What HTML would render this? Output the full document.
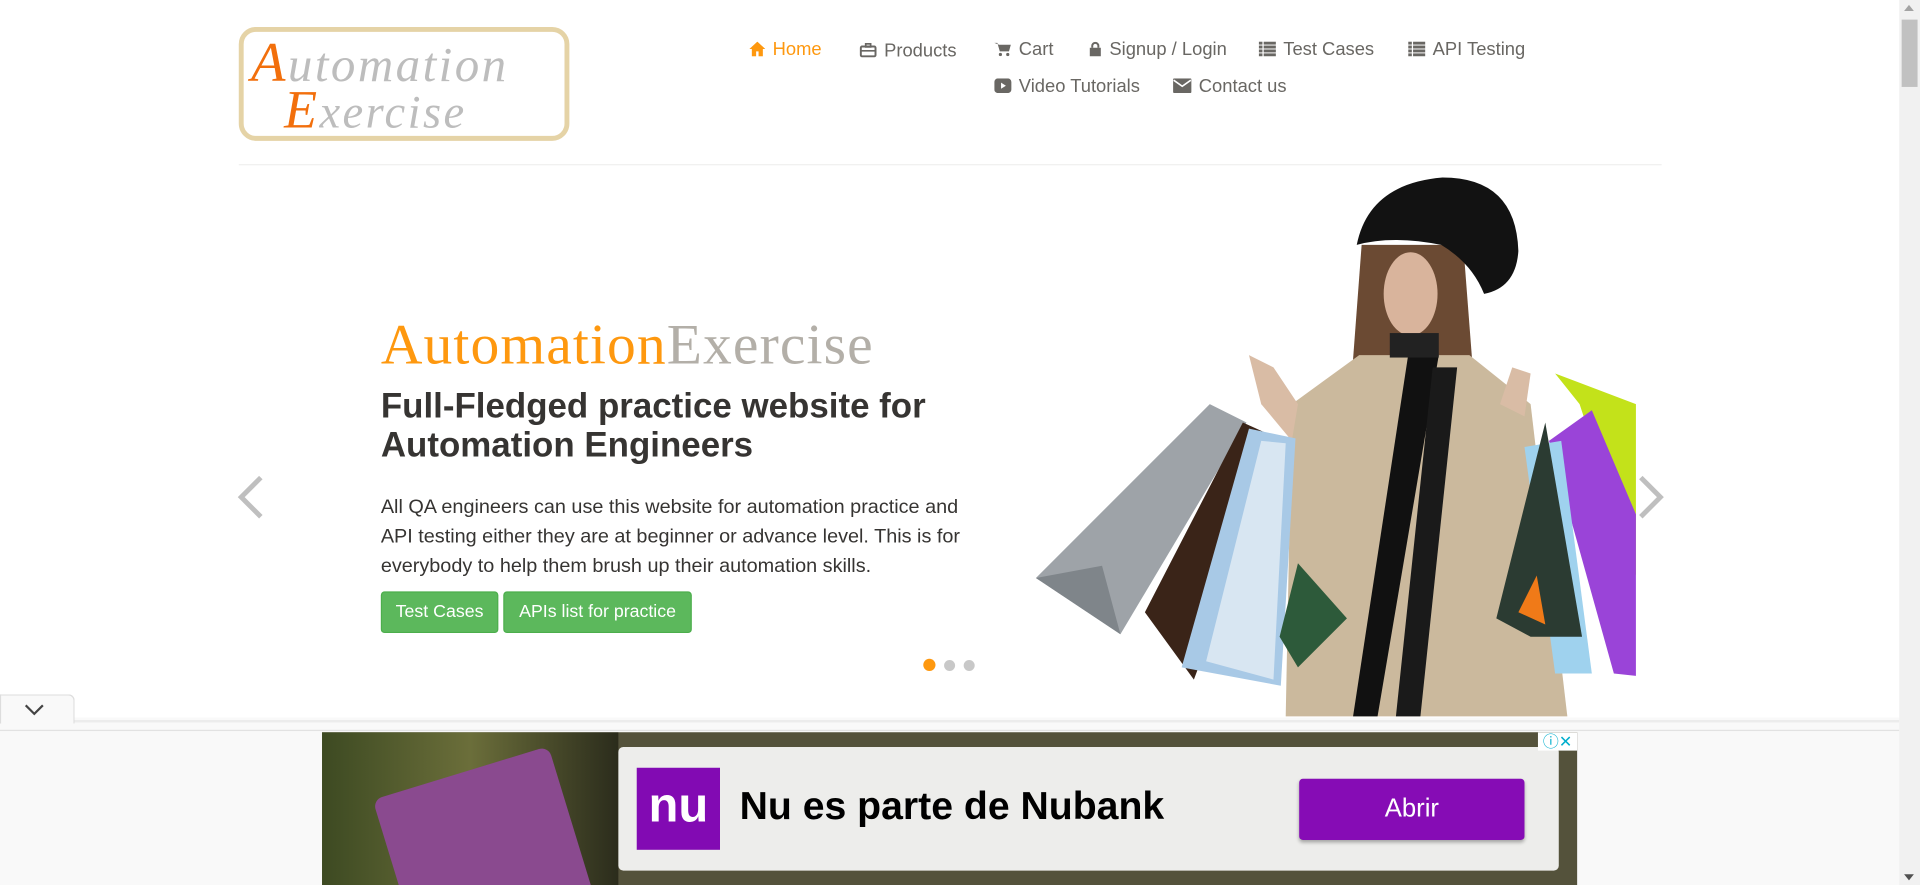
<!DOCTYPE html>
<html><head><meta charset="utf-8">
<style>
html,body{margin:0;padding:0;width:1920px;height:885px;overflow:hidden;background:#fff;font-family:"Liberation Sans",Arial,sans-serif;}
#w{position:absolute;left:0;top:0;width:1568px;height:723px;overflow:hidden;transform:scale(1.22449);transform-origin:0 0;}
.a{position:absolute;white-space:nowrap;}
.nav{font-size:15px;color:#696763;}
.nav svg{vertical-align:-1px;margin-right:6px;}
.btn{position:absolute;background:#5cb85c;border:1px solid #4cae4c;color:#fff;font-size:14.5px;border-radius:3px;text-align:center;line-height:32px;height:32px;}
</style></head><body>
<div id="w">
<div class="a" style="left:195px;top:22px;width:262px;height:85px;border:4px solid #e5d3a6;border-radius:14px;background:#fff;"></div>
<div class="a" style="left:205px;top:24px;font-family:'Liberation Serif',serif;font-style:italic;font-size:40px;color:#bdbdbd;letter-spacing:2px;"><span style="color:#f26f0c;font-size:46px">A</span>utomation</div>
<div class="a" style="left:232px;top:64px;font-family:'Liberation Serif',serif;font-style:italic;font-size:38px;color:#bdbdbd;letter-spacing:2px;"><span style="color:#f26f0c;font-size:44px">E</span>xercise</div>

<div class="a nav" style="left:612px;top:32px;color:#fe980f;"><svg width="13" height="12" viewBox="0 0 13 12"><path d="M6.5 0L0 6h2v6h3.5V8h2v4H11V6h2z" fill="#fe980f"/></svg>Home</div>
<div class="a nav" style="left:702px;top:33px;"><svg width="14" height="12" viewBox="0 0 14 12"><rect x="1" y="3" width="12" height="8" rx="1" fill="none" stroke="#696763" stroke-width="1.6"/><rect x="5" y="0.8" width="4" height="2.5" fill="none" stroke="#696763" stroke-width="1.4"/><line x1="1" y1="6.5" x2="13" y2="6.5" stroke="#696763" stroke-width="1.4"/></svg>Products</div>
<div class="a nav" style="left:812px;top:32px;"><svg width="14" height="12" viewBox="0 0 14 12"><path d="M0 1h2.5l2 7h7.5l1.5-5.5H4" fill="#696763"/><circle cx="5" cy="10.5" r="1.3" fill="#696763"/><circle cx="11" cy="10.5" r="1.3" fill="#696763"/></svg>Cart</div>
<div class="a nav" style="left:889px;top:32px;"><svg width="11" height="12" viewBox="0 0 11 12"><path d="M3 5V3.5a2.5 2.5 0 015 0V5" fill="none" stroke="#696763" stroke-width="1.6"/><rect x="1" y="5" width="9" height="7" fill="#696763"/></svg>Signup / Login</div>
<div class="a nav" style="left:1028px;top:32px;"><svg width="14" height="12" viewBox="0 0 14 12"><g fill="#696763"><rect y="0" width="3" height="2.4"/><rect x="4" y="0" width="10" height="2.4"/><rect y="3.2" width="3" height="2.4"/><rect x="4" y="3.2" width="10" height="2.4"/><rect y="6.4" width="3" height="2.4"/><rect x="4" y="6.4" width="10" height="2.4"/><rect y="9.6" width="3" height="2.4"/><rect x="4" y="9.6" width="10" height="2.4"/></g></svg>Test Cases</div>
<div class="a nav" style="left:1150px;top:32px;"><svg width="14" height="12" viewBox="0 0 14 12"><g fill="#696763"><rect y="0" width="3" height="2.4"/><rect x="4" y="0" width="10" height="2.4"/><rect y="3.2" width="3" height="2.4"/><rect x="4" y="3.2" width="10" height="2.4"/><rect y="6.4" width="3" height="2.4"/><rect x="4" y="6.4" width="10" height="2.4"/><rect y="9.6" width="3" height="2.4"/><rect x="4" y="9.6" width="10" height="2.4"/></g></svg>API Testing</div>
<div class="a nav" style="left:812px;top:62px;"><svg width="14" height="12" viewBox="0 0 14 12"><rect width="14" height="12" rx="3" fill="#696763"/><path d="M5.5 3.5v5l4-2.5z" fill="#fff"/></svg>Video Tutorials</div>
<div class="a nav" style="left:958px;top:62px;"><svg width="15" height="12" viewBox="0 0 15 12"><rect width="15" height="12" rx="1" fill="#696763"/><path d="M0.5 1.5l7 5 7-5" fill="none" stroke="#fff" stroke-width="1.3"/></svg>Contact us</div>

<div class="a" style="left:195px;top:134px;width:1162px;height:1px;background:#f0f0ef;"></div>

<div class="a" style="left:311px;top:255px;font-family:'Liberation Serif',serif;font-size:47px;letter-spacing:0.9px;color:#fe980f;">Automation<span style="color:#b3afa8">Exercise</span></div>
<div class="a" style="left:311px;top:316px;font-size:28.5px;font-weight:bold;color:#363432;line-height:32px;">Full-Fledged practice website for<br>Automation Engineers</div>
<div class="a" style="left:311px;top:402px;font-size:16.2px;color:#363432;line-height:24px;">All QA engineers can use this website for automation practice and<br>API testing either they are at beginner or advance level. This is for<br>everybody to help them brush up their automation skills.</div>
<div class="btn" style="left:311px;top:483px;width:94px;">Test Cases</div>
<div class="btn" style="left:411px;top:483px;width:152px;">APIs list for practice</div>
<div class="a" style="left:754px;top:538px;width:10px;height:10px;border-radius:50%;background:#fe980f;"></div>
<div class="a" style="left:771px;top:539px;width:9px;height:9px;border-radius:50%;background:#c8c8c8;"></div>
<div class="a" style="left:787px;top:539px;width:9px;height:9px;border-radius:50%;background:#c8c8c8;"></div>
<svg class="a" style="left:193px;top:388px" width="24" height="36" viewBox="0 0 24 36"><path d="M20 2L4 18l16 16" fill="none" stroke="#bfbfbf" stroke-width="4"/></svg>
<svg class="a" style="left:1336px;top:388px" width="24" height="36" viewBox="0 0 24 36"><path d="M4 2l16 16L4 34" fill="none" stroke="#bfbfbf" stroke-width="4"/></svg>

<svg class="a" style="left:0;top:0" width="1568" height="723" viewBox="0 0 1568 723">
<polygon points="1112,200 1195,200 1205,330 1180,380 1100,360" fill="#6b4a33"/>
<polygon points="1055,330 1110,290 1200,290 1250,330 1280,585 1050,585" fill="#cbb99d"/>
<polygon points="1060,330 1040,300 1020,290 1030,330 1055,360" fill="#d9bca5"/>
<polygon points="1225,330 1235,300 1250,305 1245,340" fill="#d9bca5"/>
<polygon points="1150,290 1175,290 1125,585 1105,585" fill="#111"/>
<polygon points="1170,300 1190,300 1160,585 1140,585" fill="#1a1a1a"/>
<ellipse cx="1152" cy="240" rx="22" ry="34" fill="#d9b49c"/>
<rect x="1135" y="272" width="40" height="20" fill="#222"/>
<path d="M1108 200q10-50 70-55q60 0 62 60q-2 30-28 35q-10-25-35-40q-40-8-69 0z" fill="#121212"/>
<polygon points="846,472 988,330 1018,345 915,518" fill="#9ea3a8"/>
<polygon points="846,472 900,462 915,518" fill="#7f858a"/>
<polygon points="935,500 1015,345 1048,360 975,555" fill="#3a2418"/>
<polygon points="965,545 1020,350 1058,358 1046,560" fill="#a8c9e6"/>
<polygon points="985,540 1030,360 1050,362 1040,555" fill="#d8e6f2"/>
<polygon points="1045,520 1060,460 1100,505 1060,545" fill="#2d5a3a"/>
<polygon points="1270,305 1336,330 1336,470 1290,330" fill="#c3e21a"/>
<polygon points="1265,360 1300,335 1336,420 1336,552 1318,550" fill="#9a44d8"/>
<polygon points="1245,365 1275,360 1300,550 1270,550" fill="#9fd2ee"/>
<polygon points="1222,505 1262,345 1292,520 1250,520" fill="#2b3b32"/>
<polygon points="1240,500 1255,470 1262,510" fill="#f07a18"/>
</svg>

<div class="a" style="left:0;top:586px;width:1551px;height:137px;background:#f9f9f9;"></div>
<div class="a" style="left:0;top:588px;width:1551px;height:2px;background:#ececec;"></div>
<div class="a" style="left:0;top:596px;width:1551px;height:1px;background:#e2e2e2;"></div>
<div class="a" style="left:0;top:567px;width:59px;height:23px;background:#f9f9f9;border:1px solid #ddd;border-bottom:none;border-radius:0 5px 0 0;"></div>
<svg class="a" style="left:20px;top:575px" width="16" height="10" viewBox="0 0 16 10"><path d="M1 1l7 7 7-7" fill="none" stroke="#444" stroke-width="1.8"/></svg>

<div class="a" style="left:263px;top:598px;width:1025px;height:125px;background:#54523b;overflow:hidden;">
  <div class="a" style="left:0;top:0;width:242px;height:125px;background:linear-gradient(90deg,#3d4a22,#6b6e3a 50%,#2b2c1c);"></div>
  <div class="a" style="left:60px;top:30px;width:150px;height:150px;background:#8a4a8f;transform:rotate(-17deg);border-radius:8px;"></div>
  <div class="a" style="left:242px;top:12px;width:768px;height:101px;background:#ededeb;border-radius:4px;"></div>
  <div class="a" style="left:257px;top:29px;width:68px;height:67px;background:#820ab3;color:#fff;font-size:40px;font-weight:bold;text-align:center;line-height:62px;">nu</div>
  <div class="a" style="left:341px;top:42px;font-size:32px;font-weight:bold;color:#000;">Nu es parte de Nubank</div>
  <div class="a" style="left:798px;top:38px;width:184px;height:50px;background:#860cb5;color:#fff;font-size:21px;text-align:center;line-height:50px;border-radius:3px;box-shadow:0 2px 3px rgba(0,0,0,.3);">Abrir</div>
  <div class="a" style="left:993px;top:0;width:32px;height:15px;background:#fff;color:#00aecd;font-size:13px;line-height:15px;text-align:center;">ⓘ✕</div>
</div>

<div class="a" style="left:1551px;top:0;width:17px;height:723px;background:#f1f1f1;"></div>
<div class="a" style="left:1553px;top:16px;width:13px;height:55px;background:#c1c1c1;"></div>
<div class="a" style="left:1555px;top:4px;width:0;height:0;border-left:4px solid transparent;border-right:4px solid transparent;border-bottom:5px solid #a3a3a3;"></div>
<div class="a" style="left:1555px;top:714px;width:0;height:0;border-left:4px solid transparent;border-right:4px solid transparent;border-top:5px solid #505050;"></div>
</div>
</body></html>
